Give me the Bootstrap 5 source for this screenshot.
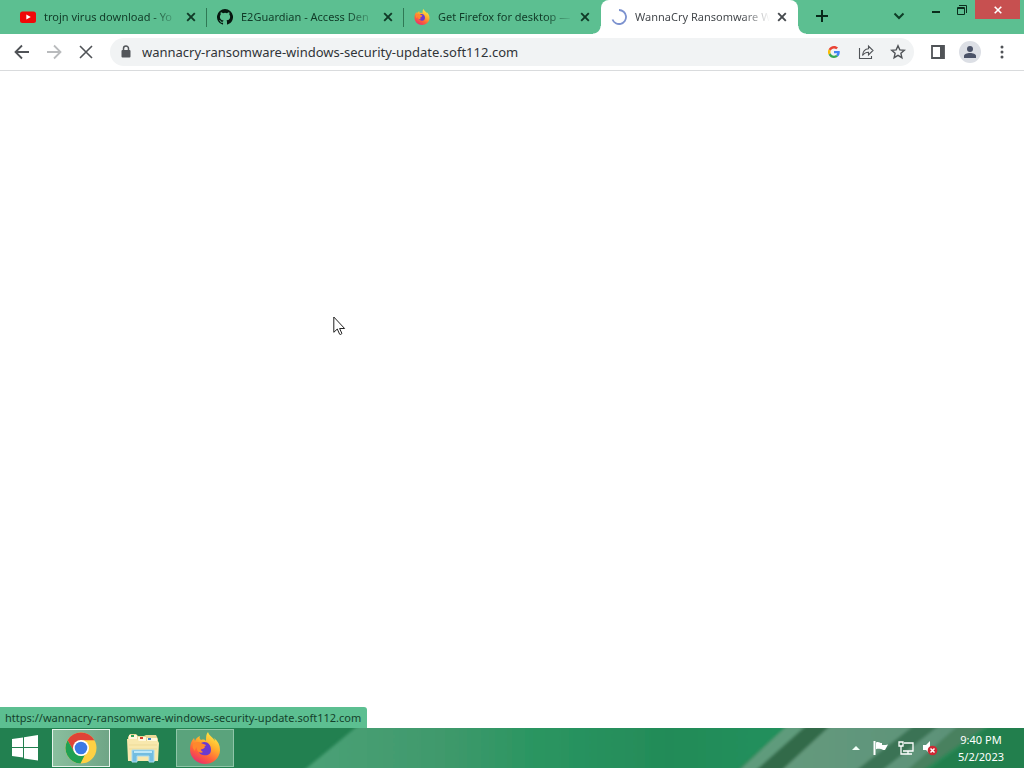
<!DOCTYPE html>
<html lang="en">
<head>
<meta charset="utf-8">
<meta name="viewport" content="width=device-width, initial-scale=1">
<title>WannaCry Ransomware</title>
<link href="https://cdn.jsdelivr.net/npm/bootstrap@5.3.0/dist/css/bootstrap.min.css" rel="stylesheet">
<style>
  body { font-family: "Noto Sans", "Open Sans", sans-serif; font-size: 11px; background: #fff; overflow: hidden; }
  button { border: 0; background: none; padding: 0; color: inherit; }
  svg { display: block; flex: none; }
  .tabstrip { background: #5cbf91; height: 34px; padding-left: 10px; color: #103a27; }
  .browser-tab { flex: 0 1 197px; min-width: 0; height: 34px; padding: 0 8px 0 10px; position: relative; }
  .browser-tab.divided::after { content: ""; position: absolute; right: 0; top: 8px; height: 19px; width: 1px; background: #2f7955; }
  .tab-title { flex: 1 1 0; min-width: 0; overflow: hidden; white-space: nowrap; text-align: left; font-size: 11px; line-height: 18px; margin: 0 4px 0 8px;
    -webkit-mask-image: linear-gradient(90deg, #000 calc(100% - 28px), transparent); mask-image: linear-gradient(90deg, #000 calc(100% - 28px), transparent); }
  .browser-tab.current { background: #fff; color: #45494d; border-radius: 8px 8px 0 0; }
  .browser-tab.current::before, .browser-tab.current::after { content: ""; position: absolute; bottom: 0; width: 8px; height: 8px; }
  .browser-tab.current::before { left: -8px; background: radial-gradient(circle at 0 0, transparent 7px, #fff 8px); }
  .browser-tab.current::after { right: -8px; background: radial-gradient(circle at 100% 0, transparent 7px, #fff 8px); }
  .tab-close { width: 16px; height: 16px; }
  .win-btn { width: 26px; height: 19px; display: flex; justify-content: center; align-items: center; }
  .win-close { width: 45px; background: #c75050; }
  .toolbar { height: 37px; padding: 0 6px; border-bottom: 1px solid #d9dbdd; color: #505357; }
  .tool { width: 32px; height: 32px; display: flex; align-items: center; justify-content: center; }
  .omnibox { background: #f1f3f4; height: 28px; border-radius: 14px; padding-left: 8px; }
  .omnibox input { border: 0; background: none; outline: 0; padding: 0; min-width: 0; font-size: 13px; line-height: 20px; color: #303438; }
  .avatar-dot { width: 22px; height: 22px; border-radius: 50%; background: #dcdfe5; }
  .status-link { background: #5cbf91; color: #143f2b; font-size: 11px; line-height: 20px; padding: 1px 6px 0 5px; border-top-right-radius: 3px; text-decoration: none; white-space: nowrap; }
  .pointer { position: absolute; left: 333px; top: 245px; }
  .taskbar { height: 40px; position: relative; color: #fff; background: #238350; }
  .wallpaper { position: absolute; inset: 0; width: 100%; height: 100%; }
  .taskbar > div { position: relative; }
  .task { width: 58px; height: 38px; display: flex; align-items: center; justify-content: center; border: 1px solid transparent; }
  .start { width: 52px; padding-right: 2px; }
  .task.open { background: #5aa37c; border-color: #8fc5a8; }
  .task.focused { background: linear-gradient(90deg, #8abf9e, #6fa586); border-color: #e4f3ea; }
  .clock { width: 70px; font-size: 11px; line-height: 17px; text-align: center; }
</style>
</head>
<body class="vh-100 d-flex flex-column m-0">
<header>
  <div class="tabstrip d-flex" role="tablist">
    <div class="browser-tab divided d-flex align-items-center">
      <svg width="16" height="16" viewBox="0 0 16 16"><rect y="2.500" width="16" height="11.500" rx="2.500" fill="#f00808"/><path d="M6.300 5.400v5.200L10.800 8z" fill="#fff"/></svg>
      <button class="tab-title" role="tab">trojn virus download - Yo</button>
      <button class="tab-close" aria-label="Close tab"><svg width="16" height="16"><path d="M4.200 4.200l7.600 7.600M11.800 4.200l-7.600 7.600" stroke="currentColor" stroke-width="1.900"/></svg></button>
    </div>
    <div class="browser-tab divided d-flex align-items-center">
      <svg width="16" height="16" viewBox="0 0 16 16" fill="#06170f"><path d="M8 0a8 8 0 0 0-2.530 15.590c.4.070.55-.17.55-.38v-1.490c-2.230.49-2.700-.94-2.700-.94-.36-.92-.89-1.170-.89-1.170-.72-.5.060-.49.060-.49.800.060 1.230.820 1.230.820.710 1.230 1.870.870 2.330.670.070-.52.280-.88.510-1.080-1.780-.2-3.640-.89-3.640-3.950 0-.87.310-1.590.820-2.150-.08-.2-.36-1.020.080-2.120 0 0 .670-.22 2.200.820a7.700 7.700 0 0 1 4 0c1.530-1.040 2.200-.82 2.200-.82.440 1.100.160 1.920.080 2.120.510.560.820 1.270.820 2.150 0 3.070-1.870 3.750-3.650 3.950.290.250.540.730.540 1.480v2.200c0 .210.150.460.550.380A8 8 0 0 0 8 0z"/></svg>
      <button class="tab-title" role="tab">E2Guardian - Access Den</button>
      <button class="tab-close" aria-label="Close tab"><svg width="16" height="16"><path d="M4.200 4.200l7.600 7.600M11.800 4.200l-7.600 7.600" stroke="currentColor" stroke-width="1.900"/></svg></button>
    </div>
    <div class="browser-tab d-flex align-items-center">
      <svg width="16" height="16" viewBox="0 0 32 32"><use href="#firefox"/></svg>
      <button class="tab-title" role="tab">Get Firefox for desktop —</button>
      <button class="tab-close" aria-label="Close tab"><svg width="16" height="16"><path d="M4.200 4.200l7.600 7.600M11.800 4.200l-7.600 7.600" stroke="currentColor" stroke-width="1.900"/></svg></button>
    </div>
    <div class="browser-tab current d-flex align-items-center">
      <svg width="16" height="16"><path d="M8 1a7 7 0 1 1-6.500 9.500" fill="none" stroke="#7c92cf" stroke-width="1.800"/></svg>
      <button class="tab-title" role="tab" aria-selected="true">WannaCry Ransomware W</button>
      <button class="tab-close" aria-label="Close tab"><svg width="16" height="16"><path d="M4.200 4.200l7.600 7.600M11.800 4.200l-7.600 7.600" stroke="currentColor" stroke-width="1.900"/></svg></button>
    </div>
    <button class="tool ms-2" aria-label="New tab"><svg width="14" height="14"><path d="M7 1v12M1 7h12" stroke="#08291a" stroke-width="2"/></svg></button>
    <div class="ms-auto d-flex align-items-start pe-1">
      <button class="tool me-2" aria-label="Search tabs"><svg width="12" height="12"><path d="M1.500 3.500L6 8l4.500-4.500" fill="none" stroke="#0e3d27" stroke-width="2"/></svg></button>
      <button class="win-btn" aria-label="Minimize"><svg width="8" height="6"><path d="M0 5h8" stroke="#0b2c1c" stroke-width="2"/></svg></button>
      <button class="win-btn" aria-label="Restore"><svg width="10" height="10" fill="none" stroke="#0b2c1c"><path d="M.5 2.500h7v7h-7zM2 .5h7.500V8M.5 3.500h7"/></svg></button>
      <button class="win-btn win-close" aria-label="Close"><svg width="8" height="8"><path d="M.7.7l6.600 6.600M7.300.7L.7 7.300" stroke="#fff" stroke-width="1.600"/></svg></button>
    </div>
  </div>
  <div class="toolbar d-flex align-items-center">
    <button class="tool" aria-label="Back"><svg width="16" height="16" fill="none" stroke="currentColor" stroke-width="1.800"><path d="M15 8H2M8 1.500L1.500 8 8 14.500"/></svg></button>
    <button class="tool" aria-label="Forward"><svg width="16" height="16" fill="none" stroke="#b9bbbd" stroke-width="1.800"><path d="M1 8h13M8 1.500L14.500 8 8 14.500"/></svg></button>
    <button class="tool" aria-label="Stop"><svg width="14" height="14"><path d="M1 1l12 12M13 1L1 13" stroke="currentColor" stroke-width="1.600"/></svg></button>
    <div class="omnibox flex-grow-1 d-flex align-items-center ms-2 me-2">
      <svg width="16" height="16" viewBox="0 0 16 16"><rect x="3.500" y="6" width="9" height="7.500" rx="1" fill="#53565a"/><path d="M5.500 6.500V4.500a2.500 2.500 0 0 1 5 0v2" fill="none" stroke="#53565a" stroke-width="1.500"/></svg>
      <input class="flex-grow-1 ms-2" type="text" aria-label="Address" value="wannacry-ransomware-windows-security-update.soft112.com">
      <button class="tool" aria-label="Search with Google"><svg width="12" height="12" viewBox="0 0 48 48"><path fill="#ea4335" d="M24 9.500c3.540 0 6.700 1.220 9.200 3.600l6.900-6.900C35.900 2.400 30.500 0 24 0 14.600 0 6.500 5.400 2.600 13.200l8 6.200C12.400 13.700 17.700 9.500 24 9.500z"/><path fill="#4285f4" d="M47 24.500c0-1.600-.2-3.100-.4-4.500H24v9h12.900c-.6 3-2.200 5.500-4.800 7.200l7.700 6C44.400 38 47 31.800 47 24.500z"/><path fill="#fbbc05" d="M10.500 28.600a14.500 14.500 0 0 1 0-9.200l-8-6.200a24 24 0 0 0 0 21.600z"/><path fill="#34a853" d="M24 48c6.500 0 11.900-2.100 15.900-5.800l-7.700-6c-2.200 1.500-4.900 2.300-8.200 2.300-6.300 0-11.600-4.200-13.500-9.900l-8 6.200C6.500 42.600 14.600 48 24 48z"/></svg></button>
      <button class="tool" aria-label="Share"><svg width="16" height="16" fill="none" stroke="currentColor" stroke-width="1.100"><path d="M1.500 4v10.500h12V12M4.500 11.500c.4-4 2.300-6.500 6-6.700V2L15 6.500 10.500 11V8.200c-2.700 0-4.500 1-6 3.300z"/></svg></button>
      <button class="tool" aria-label="Bookmark"><svg width="16" height="16"><path d="M8 1.800l1.800 4.100 4.500.4-3.400 3 1 4.400L8 11.400l-3.900 2.300 1-4.400-3.400-3 4.500-.4z" fill="none" stroke="currentColor" stroke-width="1.400"/></svg></button>
    </div>
    <button class="tool" aria-label="Side panel"><svg width="14" height="14"><path d="M1 1h12v12H1z" fill="none" stroke="currentColor" stroke-width="1.800"/><path d="M9 1h4v12H9z" fill="currentColor"/></svg></button>
    <button class="tool" aria-label="Profile"><span class="avatar-dot d-flex align-items-center justify-content-center"><svg width="14" height="14" fill="#4b5368"><circle cx="7" cy="4" r="3"/><path d="M1 13v-2c0-2 3-3 6-3s6 1 6 3v2z"/></svg></span></button>
    <button class="tool" aria-label="Menu"><svg width="4" height="14" fill="currentColor"><circle cx="2" cy="2" r="1.500"/><circle cx="2" cy="7" r="1.500"/><circle cx="2" cy="12" r="1.500"/></svg></button>
  </div>
</header>
<main class="flex-grow-1 position-relative d-flex align-items-end">
  <a class="status-link" href="#">https://wannacry-ransomware-windows-security-update.soft112.com</a>
  <svg class="pointer" width="13" height="20"><path d="M.8 1v15.300l3.500-3.300 2.300 5.200c.8.700 2.300 0 2.200-1l-2.200-4.700h5z" fill="#fff" stroke="#222" stroke-width="1"/></svg>
</main>
<footer class="taskbar d-flex justify-content-between">
  <svg class="wallpaper" viewBox="0 0 1024 40" preserveAspectRatio="none">
    <defs>
      <linearGradient id="sweep" x1="0" x2="1"><stop offset="0" stop-color="#4aa176"/><stop offset=".28" stop-color="#40996c"/><stop offset=".48" stop-color="#2a9561"/><stop offset=".75" stop-color="#238b58"/><stop offset="1" stop-color="#1f905c"/></linearGradient>
      <linearGradient id="haze" x1="0" x2="1"><stop offset="0" stop-color="#659a7d"/><stop offset="1" stop-color="#5a9077"/></linearGradient>
      <filter id="soften" x="-5%" y="-20%" width="110%" height="140%"><feGaussianBlur stdDeviation="1.500"/></filter>
    </defs>
    <path fill="#228050" d="M0 0h1024v40H0z"/>
    <g filter="url(#soften)">
      <path fill="url(#sweep)" d="M360-4H790L735 44H302z"/>
      <path fill="#5f9b7b" d="M789-4H1000L930 44H737z"/>
      <path fill="url(#haze)" d="M828-4H984L925 44H778z"/>
      <path fill="#326a49" d="M808-4h24L780 44h-26z"/>
      <path fill="#3b7355" d="M916-4h25L880 44h-26z"/>
      <path fill="#48815f" d="M960-4h29L936 44h-31z"/>
      <path fill="#237f4e" d="M989-4h60v48H920z"/>
      <path stroke="#3b9b69" d="M988-2L926 42"/>
    </g>
  </svg>
  <div class="d-flex align-items-center">
    <button class="task start" aria-label="Start"><svg width="26" height="26" fill="#fff"><path d="M0 4l11-1.600V12H0zM12 2.200L26 0v12H12zM0 13h11v9.600L0 21zM12 13h14v12.500l-14-2z"/></svg></button>
    <button class="task focused" aria-label="Chrome"><svg width="32" height="32"><circle cx="16" cy="16" r="15.500" fill="#ffd143"/><path d="M2.600 8.200A15.500 15.500 0 0 1 29.400 8.200H16L9.200 20z" fill="#df4437"/><path d="M2.600 8.200L9.300 20a8 8 0 0 0 10.500 3L15.500 31.500A15.500 15.500 0 0 1 2.600 8.200z" fill="#20a052"/><circle cx="16" cy="16" r="8" fill="#fff"/><circle cx="16" cy="16" r="6.300" fill="#3b79e5"/></svg></button>
    <button class="task mx-1" aria-label="File Explorer"><svg width="34" height="30"><path d="M2 4l2-3h6l2 2h6l2-1h10l2 4v21H2z" fill="#ead997"/><path d="M3 2h8v5H3zM12 4h8v4h-8zM21 5h10v4H21z" fill="#fff8dc"/><path d="M5 2h3v2H5z" fill="#31a457"/><path d="M14 4h3v2h-3z" fill="#d63f2c"/><path d="M22 5h3v2h-3z" fill="#3d83c4"/><path d="M1 6h10l2 2h19l1 2-1 18H2z" fill="#f8e8ad"/><path d="M3 12h28M3 16h28" stroke="#eddb98"/><path d="M6 17h22v12h-5v-6H11v6H6z" fill="#73bde0" stroke="#a9dcf1"/><path d="M8 19h18" stroke="#bee8f7" stroke-width="2"/></svg></button>
    <button class="task open" aria-label="Firefox"><svg width="32" height="32"><defs>
      <linearGradient id="flame" x1=".8" y1="0" x2=".25" y2="1"><stop offset="0" stop-color="#fff14a"/><stop offset=".4" stop-color="#ffac2c"/><stop offset=".7" stop-color="#ff603b"/><stop offset="1" stop-color="#e52b72"/></linearGradient>
      <g id="firefox"><path d="M19 0c1 4 5 5 7 9-.2-1-.5-2-1-3 4 3 6 7 6 12 0 8-7 14-15 14S1 25.500 1 17.500C1 13 2 9 5 6l1 3c1-3 3-4 5-5-1 2 0 3 1 4 3-1 4 0 5 1 0-4 0-7 2-9z" fill="url(#flame)"/><path d="M12 11c5-3 10 1 10 6.500S18 24 14 23c-3-.6-5-3-4-6 2 1 5 0 6-2l-4-1z" fill="#6b3ad0"/><path d="M4 12c3-3 7-2 8-1l5 2c-1 2-3 2-4 3-2 1-1 3 1 4-3 2-7-1-6-5-1 1-2 2-2 4-2-2-3-4-2-7z" fill="#ff882d"/></g></defs><use href="#firefox"/></svg></button>
  </div>
  <div class="d-flex align-items-center pe-2">
    <button class="me-2 px-1" aria-label="Show hidden icons"><svg width="8" height="5"><path d="M4 0l4 4H0z" fill="#f2fff8"/></svg></button>
    <button class="me-2" aria-label="Action Center"><svg width="18" height="16"><path d="M2.500 1v14" stroke="#fff" stroke-width="2"/><path d="M4 2.500c3-1.500 4 1 6 .5V5c2 .4 4-.4 6-.6l-3 5.500c-2 .8-3-.9-4-.9-2 0-3-.7-5 .3z" fill="#fff"/></svg></button>
    <button class="me-2" aria-label="Network"><svg width="16" height="16" fill="none" stroke="#fff" stroke-width="1.300"><path d="M6 3h9v8H5M10 11v3M6 14h8M3 6v8h3M1 2h4v4H1z"/></svg></button>
    <button class="me-2" aria-label="Volume muted"><svg width="16" height="16"><path d="M1 5h3l4-4v13l-4-4H1z" fill="#fff"/><circle cx="10.500" cy="10.500" r="4.800" fill="#cf2733"/><path d="M8.500 8.500l4 4M12.500 8.500l-4 4" stroke="#fff" stroke-width="1.500"/></svg></button>
    <div class="clock"><div>9:40 PM</div><div>5/2/2023</div></div>
  </div>
</footer>
<script src="https://cdn.jsdelivr.net/npm/bootstrap@5.3.0/dist/js/bootstrap.bundle.min.js"></script>
</body>
</html>
